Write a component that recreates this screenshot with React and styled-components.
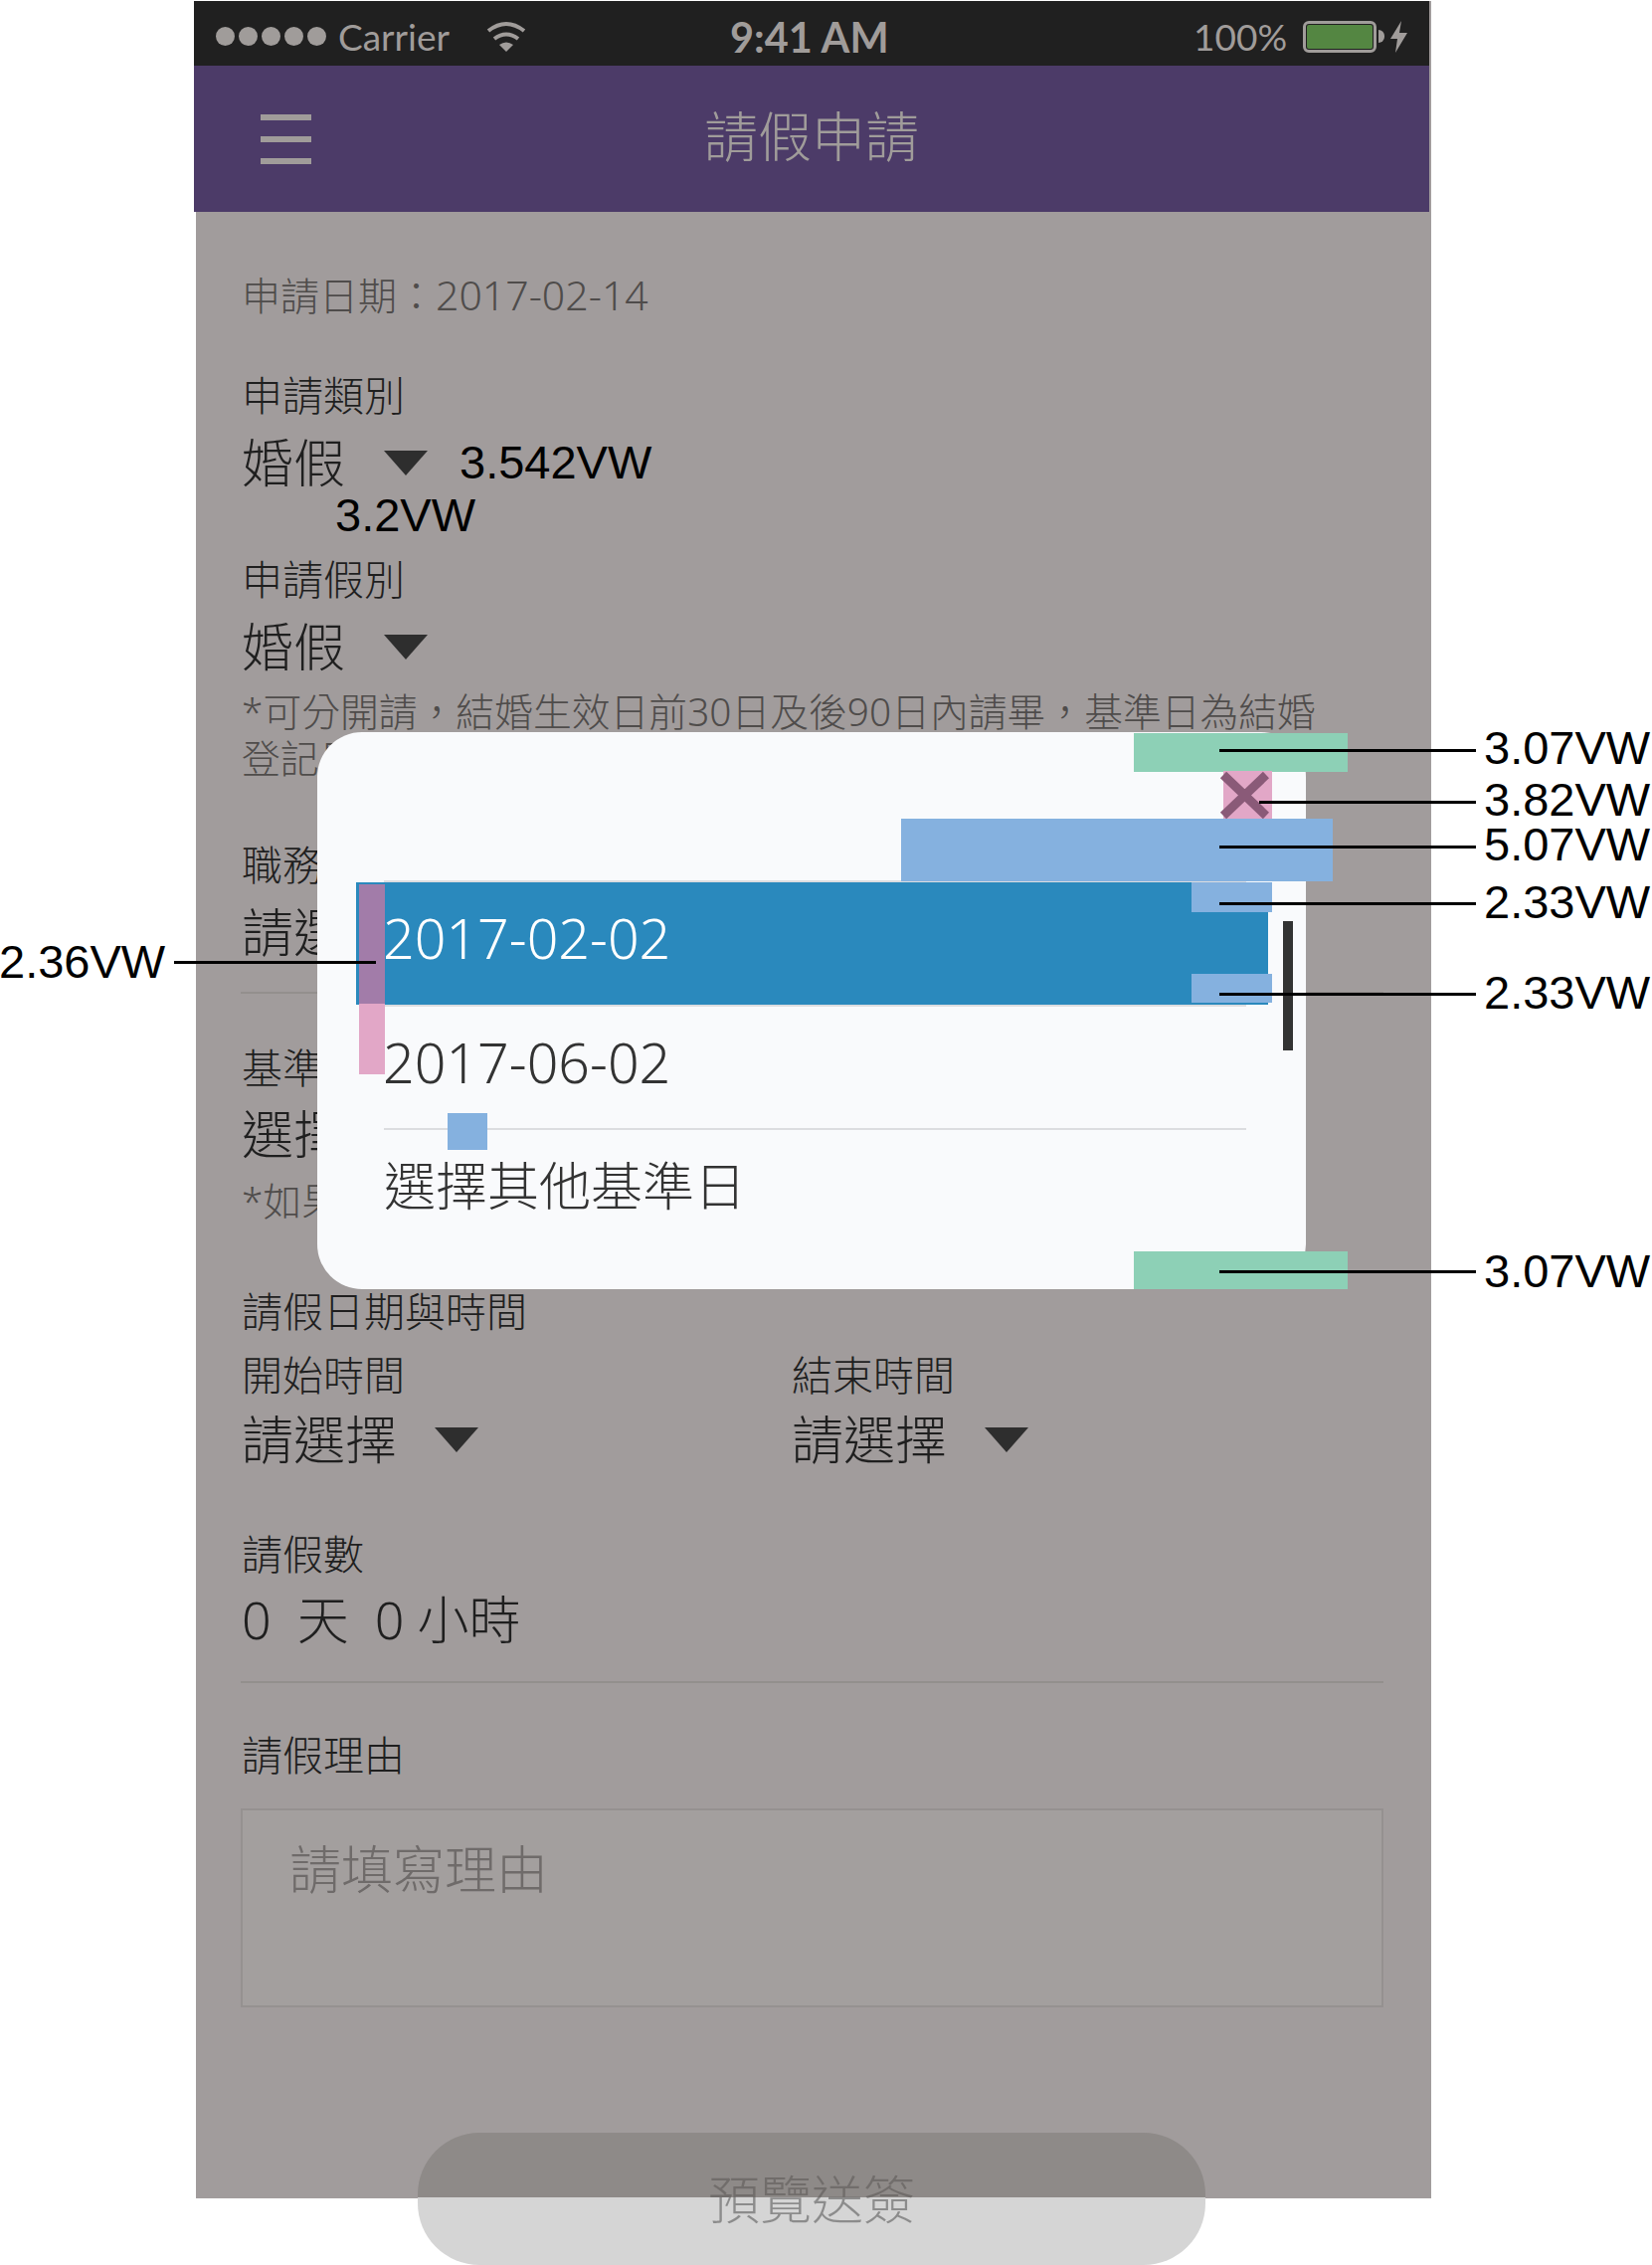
import React from 'react';
import styled, { createGlobalStyle } from 'styled-components';

const CJK = `"Noto Sans", "Noto Sans CJK TC", sans-serif`;

const GlobalStyle = createGlobalStyle`
  html, body {
    margin: 0;
    padding: 0;
    background: #fff;
  }
`;

const Canvas = styled.div`
  position: relative;
  width: 1661px;
  height: 2277px;
  overflow: hidden;
  background: #fff;
  font-family: ${CJK};
  font-weight: 300;
`;

const Screen = styled.div`
  width: 1242px;
  height: 2209px;
  margin-left: 197px;
  background: #a19c9c;
`;

const StatusBar = styled.div`
  display: flex;
  align-items: center;
  height: 65px;
  margin: 1px 2px 0 -2px;
  padding: 6px 0 0 22px;
  box-sizing: border-box;
  position: relative;
  background: #202020;
  color: #a09c9a;
  font-family: Lato, "Open Sans", sans-serif;
  font-size: 37px;
  font-weight: 400;
`;

const Dots = styled.div`
  display: flex;
  gap: 4px;
  margin-right: 12px;
`;

const Dot = styled.span`
  width: 19px;
  height: 19px;
  border-radius: 50%;
  background: #a09c9a;
`;

const Carrier = styled.span`
  width: 149px;
`;

const Clock = styled.span`
  margin-left: 205px;
  width: 466px;
  font-size: 41.5px;
  font-weight: 700;
`;

const BatteryText = styled.span`
  width: 110px;
`;

const BatteryBody = styled.div`
  width: 74px;
  height: 32px;
  box-sizing: border-box;
  border: 3px solid #a09c9a;
  border-radius: 6px;
  padding: 1px;
`;

const BatteryFill = styled.div`
  height: 100%;
  background: #548642;
  border-radius: 2px;
`;

const BatteryNub = styled.div`
  width: 6px;
  height: 13px;
  margin: 0 6px 0 2px;
  border-radius: 0 6px 6px 0;
  background: #a09c9a;
`;

const NavBar = styled.header`
  display: flex;
  align-items: center;
  justify-content: center;
  position: relative;
  height: 147px;
  margin: 0 2px 0 -2px;
  background: #4c3b68;
  color: #a09c9a;
`;

const Burger = styled.div`
  position: absolute;
  left: 67px;
  top: 49px;
  display: flex;
  flex-direction: column;
  gap: 16px;
`;

const BurgerBar = styled.span`
  width: 51px;
  height: 6px;
  background: #a09c9a;
`;

const Title = styled.h1`
  margin: 0 0 6px;
  font-size: 54px;
  font-weight: 300;
  line-height: 68px;
`;

const Form = styled.div`
  padding: 59px 48px 0 46px;
`;

const DateLine = styled.div`
  font-size: 39px;
  line-height: 48px;
  color: #4f4c4b;
`;

const DateValue = styled.span`
  font-size: 41px;
`;

const Label = styled.div`
  margin-top: ${(p) => p.$mt}px;
  font-size: 41px;
  line-height: 48px;
  color: #1f1f1f;
`;

const ValueRow = styled.div`
  display: flex;
  align-items: center;
  margin-top: ${(p) => p.$mt || 10}px;
  height: 68px;
  font-size: 52px;
  line-height: 68px;
  word-spacing: -0.5px;
  color: #1f1f1f;
  white-space: pre;
`;

const Caret = styled.span`
  width: 0;
  height: 0;
  margin-left: ${(p) => p.$ml}px;
  border-left: 22px solid transparent;
  border-right: 22px solid transparent;
  border-top: 25px solid #2e2e2e;
`;

const Note = styled.div`
  margin-top: ${(p) => p.$mt || 8}px;
  font-size: 38.8px;
  line-height: 47px;
  color: #4f4c4b;
  white-space: nowrap;
`;

const Divider = styled.div`
  height: 2px;
  margin-top: ${(p) => p.$mt}px;
  margin-left: -1px;
  background: #938f8d;
`;

const TimeGrid = styled.div`
  display: grid;
  grid-template-columns: 553px 1fr;
`;

const TextArea = styled.div`
  box-sizing: border-box;
  height: 200px;
  margin: 30px 0 0 -1px;
  padding: 25px 47px;
  border: 2px solid #959190;
  background: #a39f9e;
  font-size: 52px;
  line-height: 68px;
  color: #6f6b6a;
`;

const SubmitButton = styled.div`
  position: absolute;
  left: 420px;
  top: 2144px;
  width: 792px;
  height: 133px;
  display: flex;
  align-items: center;
  justify-content: center;
  border-radius: 62px;
  background: linear-gradient(#8e8a88 0, #8e8a88 65px, #d5d5d5 65px);
  font-size: 52px;
  line-height: 68px;
`;

const SubmitLabel = styled.span`
  background: linear-gradient(#716d6b 0, #716d6b 32px, #8c8c8c 32px);
  -webkit-background-clip: text;
  background-clip: text;
  color: transparent;
`;

const Modal = styled.div`
  position: absolute;
  left: 319px;
  top: 736px;
  width: 994px;
  height: 560px;
  box-sizing: border-box;
  padding: 149px 60px 0 67px;
  border-radius: 45px;
  background: #f9fafc;
  color: #333;
`;

const OptionRule = styled.div`
  height: 2px;
  background: #dcdde0;
`;

const OptionRow = styled.div`
  display: flex;
  align-items: center;
  height: ${(p) => (p.$selected ? 123 : 122)}px;
  box-sizing: border-box;
  padding-bottom: ${(p) => (p.$selected ? 12 : 10)}px;
  margin: ${(p) => (p.$selected ? '0 -22px 0 -28px' : '0')};
  padding-left: ${(p) => (p.$selected ? 27 : 0)}px;
  background: ${(p) => (p.$selected ? '#2a89bd' : 'transparent')};
  color: ${(p) => (p.$selected ? '#fff' : '#333')};
  font-size: ${(p) => (p.$date ? 55.5 : 52)}px;
  text-indent: ${(p) => (p.$date && !p.$selected ? -1 : 0)}px;
  line-height: 68px;
`;

const Scrollbar = styled.div`
  position: absolute;
  left: 971px;
  top: 190px;
  width: 10px;
  height: 130px;
  background: #333;
`;

// measurement overlays from the spec sheet
const Swatch = styled.div`
  position: absolute;
  left: ${(p) => p.$x}px;
  top: ${(p) => p.$y}px;
  width: ${(p) => p.$w}px;
  height: ${(p) => p.$h}px;
  background: ${(p) => p.$c};
`;

const Leader = styled.div`
  position: absolute;
  left: ${(p) => p.$from}px;
  top: ${(p) => p.$y - 1}px;
  width: ${(p) => p.$to - p.$from}px;
  height: 3px;
  background: #000;
`;

const SpecLabel = styled.div`
  position: absolute;
  left: ${(p) => p.$x}px;
  top: ${(p) => p.$y - 24}px;
  font-family: "Liberation Sans", Arial, sans-serif;
  font-size: 47px;
  font-weight: 400;
  line-height: 40px;
  height: 40px;
  color: #000;
  white-space: nowrap;
`;

const CloseIcon = styled.svg`
  position: absolute;
  left: 1226px;
  top: 775px;
`;

const SWATCHES = [
  { x: 1140, y: 737, w: 215, h: 39, c: '#8dd0b6' },
  { x: 1140, y: 1258, w: 215, h: 38, c: '#8dd0b6' },
  { x: 1230, y: 775, w: 49, h: 48, c: '#e2a7c7' },
  { x: 906, y: 823, w: 434, h: 63, c: '#85b1df' },
  { x: 1198, y: 887, w: 81, h: 30, c: '#85b1df' },
  { x: 1198, y: 979, w: 81, h: 29, c: '#85b1df' },
  { x: 361, y: 889, w: 26, h: 120, c: '#a27ca9' },
  { x: 361, y: 1009, w: 26, h: 71, c: '#e2a7c7' },
  { x: 450, y: 1119, w: 40, h: 37, c: '#85b1df' },
];

const LEADERS = [
  { from: 1226, to: 1484, y: 754 },
  { from: 1266, to: 1484, y: 806 },
  { from: 1226, to: 1484, y: 851 },
  { from: 1226, to: 1484, y: 908 },
  { from: 1226, to: 1484, y: 999 },
  { from: 1226, to: 1484, y: 1278 },
  { from: 175, to: 378, y: 967 },
];

const LABELS = [
  { text: '3.07VW', x: 1492, y: 756 },
  { text: '3.82VW', x: 1492, y: 808 },
  { text: '5.07VW', x: 1492, y: 853 },
  { text: '2.33VW', x: 1492, y: 911 },
  { text: '2.33VW', x: 1492, y: 1002 },
  { text: '3.07VW', x: 1492, y: 1282 },
  { text: '2.36VW', x: -1, y: 971 },
  { text: '3.542VW', x: 462, y: 469 },
  { text: '3.2VW', x: 337, y: 522 },
];

const App = () => (
  <Canvas>
    <GlobalStyle />
    <Screen>
      <StatusBar>
        <Dots>
          {[0, 1, 2, 3, 4].map((i) => (
            <Dot key={i} />
          ))}
        </Dots>
        <Carrier>Carrier</Carrier>
        <svg width="40" height="31" viewBox="0 0 40 31" fill="none">
          <path d="M2 10Q20 -4 38 10" stroke="#a09c9a" strokeWidth="4" />
          <path d="M8 18Q20 9 32 18" stroke="#a09c9a" strokeWidth="4" />
          <path d="M13 24Q20 19 27 24L20 31Z" fill="#a09c9a" />
        </svg>
        <Clock>9:41 AM</Clock>
        <BatteryText>100%</BatteryText>
        <BatteryBody>
          <BatteryFill />
        </BatteryBody>
        <BatteryNub />
        <svg width="17" height="32" viewBox="0 0 17 32">
          <path d="M11 0L0 18H7L5 32L17 12H9Z" fill="#a09c9a" />
        </svg>
      </StatusBar>
      <NavBar>
        <Burger>
          <BurgerBar />
          <BurgerBar />
          <BurgerBar />
        </Burger>
        <Title>請假申請</Title>
      </NavBar>
      <Form>
        <DateLine>
          申請日期：<DateValue>2017-02-14</DateValue>
        </DateLine>
        <Label $mt={52}>申請類別</Label>
        <ValueRow>
          婚假
          <Caret $ml={39} />
        </ValueRow>
        <Label $mt={59}>申請假別</Label>
        <ValueRow $mt={10}>
          婚假
          <Caret $ml={39} />
        </ValueRow>
        <Note>
          *可分開請，結婚生效日前30日及後90日內請畢，基準日為結婚
          <br />
          登記日
        </Note>
        <Label $mt={59}>職務代理人</Label>
        <ValueRow>請選擇</ValueRow>
        <Divider $mt={26} />
        <Label $mt={50}>基準日</Label>
        <ValueRow $mt={9}>選擇</ValueRow>
        <Note $mt={10}>*如果</Note>
        <Label $mt={63}>請假日期與時間</Label>
        <TimeGrid>
          <div>
            <Label $mt={16}>開始時間</Label>
            <ValueRow $mt={7}>
              請選擇
              <Caret $ml={38} />
            </ValueRow>
          </div>
          <div>
            <Label $mt={16}>結束時間</Label>
            <ValueRow $mt={7}>
              請選擇
              <Caret $ml={38} />
            </ValueRow>
          </div>
        </TimeGrid>
        <Label $mt={57}>請假數</Label>
        <ValueRow $mt={8}>{'0  天  0 小時'}</ValueRow>
        <Divider $mt={28} />
        <Label $mt={48}>請假理由</Label>
        <TextArea>請填寫理由</TextArea>
      </Form>
    </Screen>
    <SubmitButton>
      <SubmitLabel>預覽送簽</SubmitLabel>
    </SubmitButton>
    <Modal>
      <OptionRule />
      <OptionRow $selected $date>
        2017-02-02
      </OptionRow>
      <OptionRule />
      <OptionRow $date>2017-06-02</OptionRow>
      <OptionRule />
      <OptionRow>選擇其他基準日</OptionRow>
      <Scrollbar />
    </Modal>
    {SWATCHES.map((s) => (
      <Swatch key={`${s.x}-${s.y}`} $x={s.x} $y={s.y} $w={s.w} $h={s.h} $c={s.c} />
    ))}
    <CloseIcon width="50" height="48" viewBox="0 0 50 48">
      <path d="M4 4L47 45M47 4L4 45" stroke="#8a5a78" strokeWidth="9" fill="none" />
    </CloseIcon>
    {LEADERS.map((l) => (
      <Leader key={l.y} $from={l.from} $to={l.to} $y={l.y} />
    ))}
    {LABELS.map((l) => (
      <SpecLabel key={`${l.text}-${l.y}`} $x={l.x} $y={l.y}>
        {l.text}
      </SpecLabel>
    ))}
  </Canvas>
);

export default App;
